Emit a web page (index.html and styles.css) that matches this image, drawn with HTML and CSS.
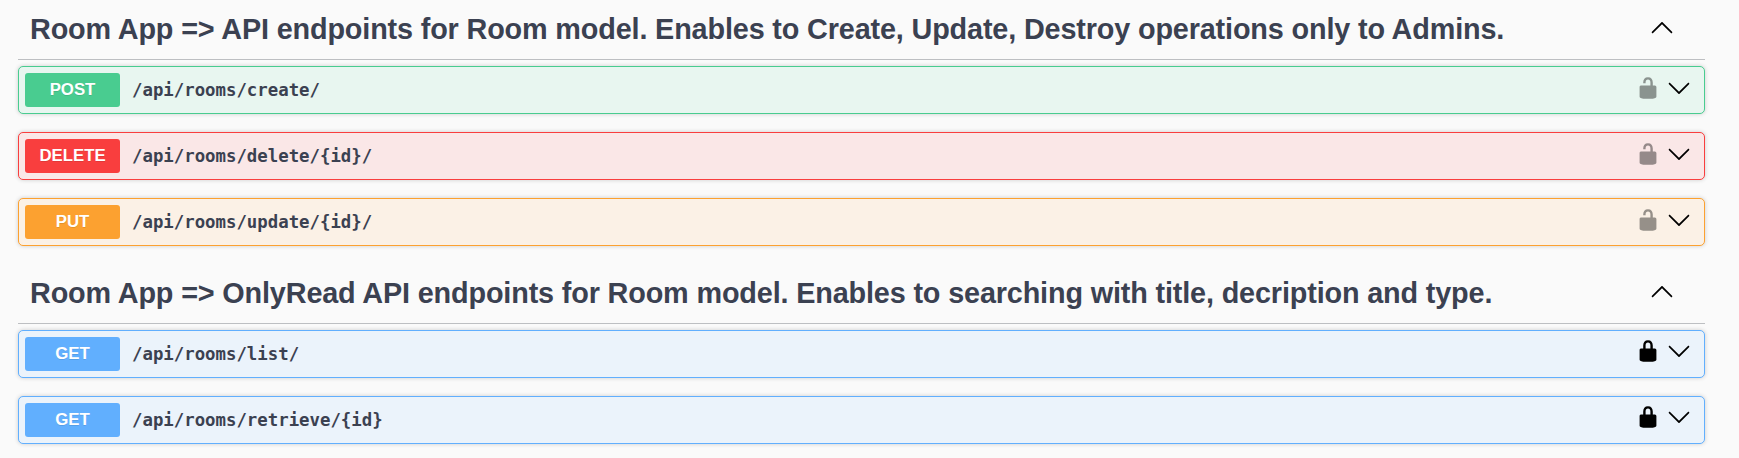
FILE: index.html
```html
<!DOCTYPE html>
<html lang="en">
<head>
<meta charset="utf-8">
<title>Room App API</title>
<link rel="stylesheet" href="styles.css">
</head>
<body>
<svg class="sprite" aria-hidden="true">
  <symbol id="arrow-up" viewBox="0 0 20 20"><path d="M17.418 14.908C17.69 15.176 18.127 15.176 18.397 14.908C18.667 14.64 18.668 14.207 18.397 13.939L10.489 6.109C10.219 5.841 9.782 5.841 9.51 6.109L1.602 13.939C1.332 14.207 1.332 14.64 1.602 14.908C1.873 15.176 2.311 15.176 2.581 14.908L10 7.767L17.418 14.908Z"/></symbol>
  <symbol id="arrow-down" viewBox="0 0 20 20"><path transform="matrix(1 0 0 -1 0 20)" d="M17.418 14.908C17.69 15.176 18.127 15.176 18.397 14.908C18.667 14.64 18.668 14.207 18.397 13.939L10.489 6.109C10.219 5.841 9.782 5.841 9.51 6.109L1.602 13.939C1.332 14.207 1.332 14.64 1.602 14.908C1.873 15.176 2.311 15.176 2.581 14.908L10 7.767L17.418 14.908Z"/></symbol>
  <symbol id="unlocked" viewBox="0 0 20 20"><path d="M15.8 8H14V5.6C14 2.703 12.665 1 10 1 7.334 1 6 2.703 6 5.6V6h2v-.801C8 3.754 8.797 3 10 3c1.203 0 2 .754 2 2.199V8H4c-.553 0-1 .646-1 1.199V17c0 .549.428 1.139.951 1.307l1.197.387C5.672 18.861 6.55 19 7.1 19h5.8c.549 0 1.428-.139 1.951-.307l1.196-.387c.524-.167.953-.757.953-1.306V9.199C17 8.646 16.352 8 15.8 8z"/></symbol>
  <symbol id="locked" viewBox="0 0 20 20"><path d="M15.8 8H14V5.6C14 2.703 12.665 1 10 1 7.334 1 6 2.703 6 5.6V8H4c-.553 0-1 .646-1 1.199V17c0 .549.428 1.139.951 1.307l1.197.387C5.672 18.861 6.55 19 7.1 19h5.8c.549 0 1.428-.139 1.951-.307l1.196-.387c.524-.167.953-.757.953-1.306V9.199C17 8.646 16.352 8 15.8 8zM12 8H8V5.199C8 3.754 8.797 3 10 3c1.203 0 2 .754 2 2.199V8z"/></symbol>
</svg>
<main class="api">
  <section class="group">
    <header class="group-header">
      <h3 class="group-title">Room App =&gt; API endpoints for Room model. Enables to Create, Update, Destroy operations only to Admins.</h3>
      <svg class="icon"><use href="#arrow-up"/></svg>
    </header>
    <div class="op op-post">
      <span class="method">POST</span><span class="path">/api/rooms/create/</span>
      <span class="actions"><svg class="icon icon-faded"><use href="#unlocked"/></svg><svg class="icon icon-arrow"><use href="#arrow-down"/></svg></span>
    </div>
    <div class="op op-delete">
      <span class="method">DELETE</span><span class="path">/api/rooms/delete/{id}/</span>
      <span class="actions"><svg class="icon icon-faded"><use href="#unlocked"/></svg><svg class="icon icon-arrow"><use href="#arrow-down"/></svg></span>
    </div>
    <div class="op op-put">
      <span class="method">PUT</span><span class="path">/api/rooms/update/{id}/</span>
      <span class="actions"><svg class="icon icon-faded"><use href="#unlocked"/></svg><svg class="icon icon-arrow"><use href="#arrow-down"/></svg></span>
    </div>
  </section>
  <section class="group">
    <header class="group-header">
      <h3 class="group-title">Room App =&gt; OnlyRead API endpoints for Room model. Enables to searching with title, decription and type.</h3>
      <svg class="icon"><use href="#arrow-up"/></svg>
    </header>
    <div class="op op-get">
      <span class="method">GET</span><span class="path">/api/rooms/list/</span>
      <span class="actions"><svg class="icon"><use href="#locked"/></svg><svg class="icon icon-arrow"><use href="#arrow-down"/></svg></span>
    </div>
    <div class="op op-get">
      <span class="method">GET</span><span class="path">/api/rooms/retrieve/{id}</span>
      <span class="actions"><svg class="icon"><use href="#locked"/></svg><svg class="icon icon-arrow"><use href="#arrow-down"/></svg></span>
    </div>
  </section>
</main>
</body>
</html>
```
FILE: styles.css
```css
* { box-sizing: border-box; }
body { margin: 0; background: #fafafa; color: #3b4151; font-family: "Liberation Sans", Arial, sans-serif; overflow: hidden; }
.sprite { display: none; }
.api { padding: 0 34px 0 18px; }
.group-header { display: flex; justify-content: space-between; height: 60px; margin-bottom: 6px; padding: 15px 31px 0 12px; border-bottom: 1px solid #bdbfc2; }
.group-title { margin: -2px 0 0; font-size: 28.8px; letter-spacing: -.15px; line-height: 32px; font-weight: 700; white-space: nowrap; }
.icon { display: block; flex: none; width: 24px; height: 24px; fill: #000; }
.icon-faded { opacity: .4; }
.icon-arrow { margin-top: 1px; }
.op { display: flex; align-items: center; height: 48px; margin-bottom: 18px; padding: 0 13px 0 6px; border: 1px solid; border-radius: 5px; box-shadow: 0 0 4px rgba(0, 0, 0, .19); }
.method { width: 95px; height: 34px; border-radius: 3px; color: #fff; font-size: 16.8px; line-height: 33px; font-weight: 700; text-align: center; text-shadow: 0 1px 0 rgba(0, 0, 0, .1); }
.path { margin-left: 12px; font: 700 17.35px/24px "DejaVu Sans Mono", monospace; }
.actions { display: flex; align-items: flex-start; gap: 7px; height: 24px; margin: 0 0 4px auto; }
.op-get .actions { margin-bottom: 6px; }
.op-post { border-color: #49cc90; background: #e8f6f0; }
.op-post .method { background: #49cc90; }
.op-delete { border-color: #f93e3e; background: #fae7e7; }
.op-delete .method { background: #f93e3e; }
.op-put { border-color: #fca130; background: #fbf1e6; }
.op-put .method { background: #fca130; }
.op-get { border-color: #61affe; background: #ebf3fb; }
.op-get .method { background: #61affe; }
```
